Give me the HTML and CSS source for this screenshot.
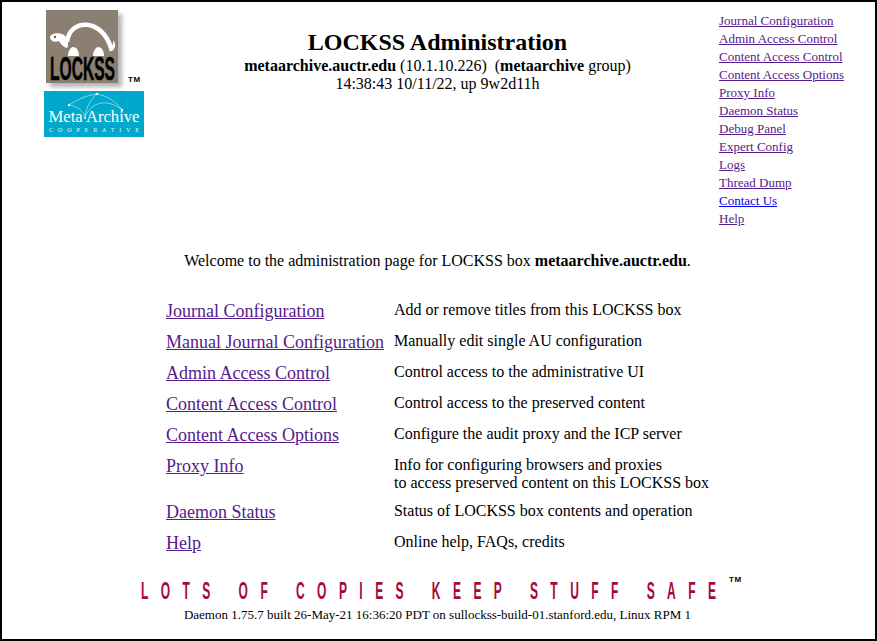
FILE: index.html
```html
<!DOCTYPE html>
<html lang="en">
<head>
<meta charset="utf-8">
<title>LOCKSS Administration</title>
<link rel="stylesheet" href="styles.css">
</head>
<body>
<div class="frame">
  <header class="top">
    <div class="logos">
      <div class="lockss-row">
        <svg class="lockss-logo" width="80" height="80" viewBox="0 0 80 80" aria-label="LOCKSS">
          <defs><filter id="sh" x="-10%" y="-10%" width="125%" height="125%"><feGaussianBlur stdDeviation="2"/></filter></defs>
          <rect x="4" y="4" width="72" height="73" fill="#b5b5b5" filter="url(#sh)"/>
          <rect x="0" y="0" width="72" height="73" fill="#8a7f70"/>
          <path d="M21 32 C24 8 56 8 65 38" fill="none" stroke="#fff" stroke-width="4.5"/>
          <path d="M64 36 C66 36 68 34 67 30 L69 33 C70 38 67 42 63 41 Z" fill="#fff"/>
          <path d="M4 27 C5 23 13 22 18 25 C22 28 23 36 21 38 C17 37 14 33 13 31 C9 33 4 31 4 27 Z" fill="#fff"/>
          <path d="M22 46 C22 41 25 37 27 37 C31 37 33 41 33 46 Z M47 46 C47 41 50 37 52 37 C56 37 58 41 58 46 Z" fill="#fff"/>
          <circle cx="9" cy="27" r="1" fill="#222"/>
          <text class="lockss-text" x="36.500" y="70" text-anchor="middle" textLength="65" lengthAdjust="spacingAndGlyphs">LOCKSS</text>
        </svg>
        <span class="tm tm-logo">TM</span>
      </div>
      <svg class="meta-logo" width="100" height="46" viewBox="0 0 100 46" aria-label="MetaArchive Cooperative">
        <rect width="100" height="46" fill="#00a9cc"/>
        <g fill="none" stroke="#d7f1f6" stroke-width=".6">
          <path d="M25 14 C34 8 44 4 53 3"/>
          <path d="M25 14 C32 15 39 19 41 26"/>
          <path d="M41 26 C42 16 47 8 53 3"/>
          <path d="M53 3 C63 5 73 11 78 19"/>
          <path d="M41 26 C47 12 62 6 78 19"/>
        </g>
        <g fill="#fff"><circle cx="25" cy="14" r="1.2"/><circle cx="53" cy="3" r="1.2"/><circle cx="78" cy="19" r="1.2"/><circle cx="41" cy="27" r="1"/></g>
        <text class="meta-text" x="50" y="31" text-anchor="middle" textLength="91" lengthAdjust="spacingAndGlyphs">Meta Archive</text>
        <text class="coop-text" x="50" y="41" text-anchor="middle" textLength="90">COOPERATIVE</text>
      </svg>
    </div>
    <div class="title">
      <h1>LOCKSS Administration</h1>
      <p class="host"><b>metaarchive.auctr.edu</b> (10.1.10.226)&nbsp; (<b>metaarchive</b> group)</p>
      <p class="time">14:38:43 10/11/22, up 9w2d11h</p>
    </div>
    <nav class="side">
      <a href="#j">Journal Configuration</a>
      <a href="#a">Admin Access Control</a>
      <a href="#c">Content Access Control</a>
      <a href="#o">Content Access Options</a>
      <a href="#p">Proxy Info</a>
      <a href="#d">Daemon Status</a>
      <a href="#b">Debug Panel</a>
      <a href="#e">Expert Config</a>
      <a href="#l">Logs</a>
      <a href="#t">Thread Dump</a>
      <a class="unvisited" href="#u">Contact Us</a>
      <a href="#h">Help</a>
    </nav>
  </header>
  <p class="welcome">Welcome to the administration page for LOCKSS box <b>metaarchive.auctr.edu</b>.</p>
  <div class="menu">
    <a href="#j">Journal Configuration</a><p>Add or remove titles from this LOCKSS box</p>
    <a href="#m">Manual Journal Configuration</a><p>Manually edit single AU configuration</p>
    <a href="#a">Admin Access Control</a><p>Control access to the administrative UI</p>
    <a href="#c">Content Access Control</a><p>Control access to the preserved content</p>
    <a href="#o">Content Access Options</a><p>Configure the audit proxy and the ICP server</p>
    <a href="#p">Proxy Info</a><p>Info for configuring browsers and proxies<br>to access preserved content on this LOCKSS box</p>
    <a href="#d">Daemon Status</a><p>Status of LOCKSS box contents and operation</p>
    <a href="#h">Help</a><p>Online help, FAQs, credits</p>
  </div>
  <footer class="foot">
    <div class="tagline">
      <svg class="motto" width="577" height="22" viewBox="0 0 1154 22" preserveAspectRatio="none">
        <text class="motto-text" x="0" y="20" textLength="1150">LOTS OF COPIES KEEP STUFF SAFE</text>
      </svg>
      <span class="tm tm-foot">TM</span>
    </div>
    <p class="build">Daemon 1.75.7 built 26-May-21 16:36:20 PDT on sullockss-build-01.stanford.edu, Linux RPM 1</p>
  </footer>
</div>
</body>
</html>
```
FILE: styles.css
```css
html, body { margin: 0; padding: 0; background: #fff; }
body { font-family: "Liberation Serif", "Times New Roman", serif; color: #000; }
p, h1 { margin: 0; }
a { color: #551a8b; }
.frame { box-sizing: border-box; width: 877px; height: 641px; border: 2px solid #000; display: flex; flex-direction: column; overflow: hidden; }
.top { display: grid; grid-template-columns: 170px 531px 1fr; height: 224px; }
.logos { display: flex; flex-direction: column; padding: 8px 0 0 42px; }
.lockss-row { display: flex; align-items: flex-end; height: 81px; padding-left: 2px; }
.lockss-logo { display: block; flex: none; align-self: flex-start; }
.lockss-text { font: 700 34px "Liberation Sans", sans-serif; fill: #000; stroke: #000; stroke-width: .5px; }
.tm { font: 700 8px/8px "Liberation Sans", sans-serif; letter-spacing: .5px; }
.tm-logo { margin: 0 0 7px 2px; }
.meta-logo { display: block; }
.meta-text { font: 17px "Liberation Serif", serif; fill: #fff; }
.coop-text { font: 6px "Liberation Serif", serif; fill: #e6f6f9; }
.title { text-align: center; padding-top: 26px; font-size: 16px; line-height: 18px; }
.title h1 { font-size: 24px; line-height: 29px; font-weight: 700; }
.side { display: flex; flex-direction: column; font-size: 13px; line-height: 18px; padding: 10px 0 0 16px; }
.side a { width: max-content; }
.side a.unvisited { color: #0000ee; }
.welcome { text-align: center; font-size: 16px; line-height: 18px; margin-top: 26px; padding-right: 2px; }
.menu { display: grid; grid-template-columns: max-content max-content; column-gap: 10px; row-gap: 10px; margin: 31px 0 0 164px; align-items: start; }
.menu a { font-size: 18px; line-height: 21px; }
.menu p { font-size: 16px; line-height: 18px; }
.foot { margin-top: 25px; text-align: center; }
.tagline { display: flex; align-items: flex-start; height: 28px; padding-left: 139px; }
.motto { display: block; flex: none; }
.motto-text { font: 700 24px "Liberation Sans", sans-serif; fill: #a5093a; }
.tm-foot { margin: -3px 0 0 11px; }
.build { font-size: 13px; line-height: 15px; margin-top: 0; padding-right: 2px; }
```
